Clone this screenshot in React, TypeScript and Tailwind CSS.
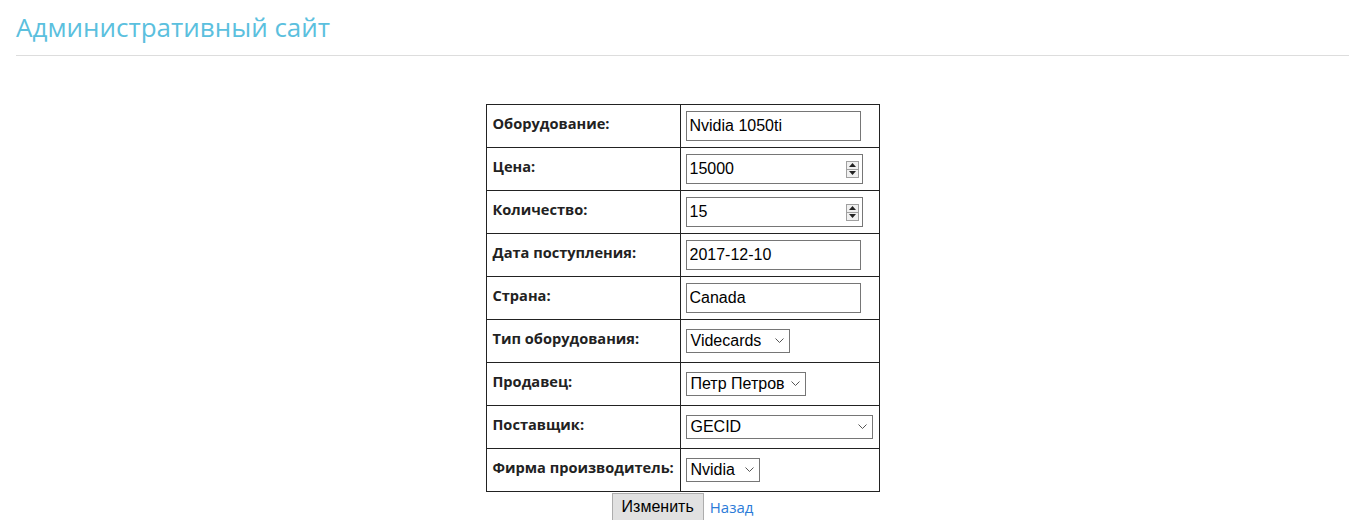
import React from 'react';

const label = 'block text-[14.6px] font-bold text-[#222] mb-[7px] leading-[20px] whitespace-nowrap';
const inputBase =
  'border border-[#767676] bg-white text-[16px] text-black px-[3px] h-[30px] outline-none';

function Spinner() {
  return (
    <div className="flex flex-col w-[13px] h-[17px] border border-[#a0a0a0] bg-[#f0f0f0]">
      <div className="flex-1 flex items-center justify-center border-b border-[#a0a0a0]">
        <svg width="7" height="4" viewBox="0 0 7 4">
          <path d="M3.5 0L7 4H0z" fill="#222" />
        </svg>
      </div>
      <div className="flex-1 flex items-center justify-center">
        <svg width="7" height="4" viewBox="0 0 7 4">
          <path d="M0 0h7L3.5 4z" fill="#222" />
        </svg>
      </div>
    </div>
  );
}

function NumberField({ value }: { value: string }) {
  return (
    <div className="flex items-center w-[177px] h-[30px] border border-[#767676] bg-white pl-[3px] pr-[3px]">
      <input
        defaultValue={value}
        className="flex-1 min-w-0 text-[16px] text-black outline-none border-0 bg-transparent"
      />
      <Spinner />
    </div>
  );
}

function Select({ value, width }: { value: string; width: string }) {
  return (
    <div
      className={`${width} h-[24px] border border-[#767676] bg-white flex items-center justify-between pl-[4px] pr-[5px]`}
    >
      <span className="text-[16px] text-black leading-none whitespace-nowrap">{value}</span>
      <svg width="9" height="6" viewBox="0 0 9 6" className="ml-1 shrink-0">
        <path d="M0.5 0.5L4.5 4.5L8.5 0.5" fill="none" stroke="#555" strokeWidth="1" />
      </svg>
    </div>
  );
}

const rows: { name: string; field: React.ReactNode }[] = [
  { name: 'Оборудование:', field: <input defaultValue="Nvidia 1050ti" className={`${inputBase} w-[175px]`} /> },
  { name: 'Цена:', field: <NumberField value="15000" /> },
  { name: 'Количество:', field: <NumberField value="15" /> },
  { name: 'Дата поступления:', field: <input defaultValue="2017-12-10" className={`${inputBase} w-[175px]`} /> },
  { name: 'Страна:', field: <input defaultValue="Canada" className={`${inputBase} w-[175px]`} /> },
  { name: 'Тип оборудования:', field: <Select value="Videcards" width="w-[104px]" /> },
  { name: 'Продавец:', field: <Select value="Петр Петров" width="w-[120px]" /> },
  { name: 'Поставщик:', field: <Select value="GECID" width="w-[187px]" /> },
  { name: 'Фирма производитель:', field: <Select value="Nvidia" width="w-[74px]" /> },
];

export default function App() {
  return (
    <div className="bg-white min-h-[520px] px-[16px]" style={{ fontFamily: '"Liberation Sans", Arial, sans-serif' }}>
      <h1 className="text-[26px] leading-[36px] pt-[9px] pb-[10px] text-[#5bc0de] font-['Open_Sans',sans-serif] font-normal">
        Административный сайт
      </h1>
      <hr className="border-t border-[#dddddd]" />

      <div className="flex flex-col items-center pt-[48px]">
        <table className="border-collapse border border-[#222] table-fixed w-[393px]">
          <colgroup>
            <col className="w-[194px]" />
            <col className="w-[199px]" />
          </colgroup>
          <tbody>
            {rows.map((r) => (
              <tr key={r.name} className="h-[43px]">
                <td className="border border-[#222] pl-[6px] pr-0 align-middle">
                  <span className={`${label} font-['Open_Sans',sans-serif]`}>{r.name}</span>
                </td>
                <td className="border border-[#222] px-[5px] align-middle">{r.field}</td>
              </tr>
            ))}
          </tbody>
        </table>
        <div className="flex items-center gap-[6px] mt-[1px]">
          <button className="h-[28px] px-[9px] bg-[#e1e1e1] border border-[#adadad] text-[16px] text-black">
            Изменить
          </button>
          <a href="#" className="text-[15px] text-[#2b7bd8] font-['Open_Sans',sans-serif]">
            Назад
          </a>
        </div>
      </div>
    </div>
  );
}
